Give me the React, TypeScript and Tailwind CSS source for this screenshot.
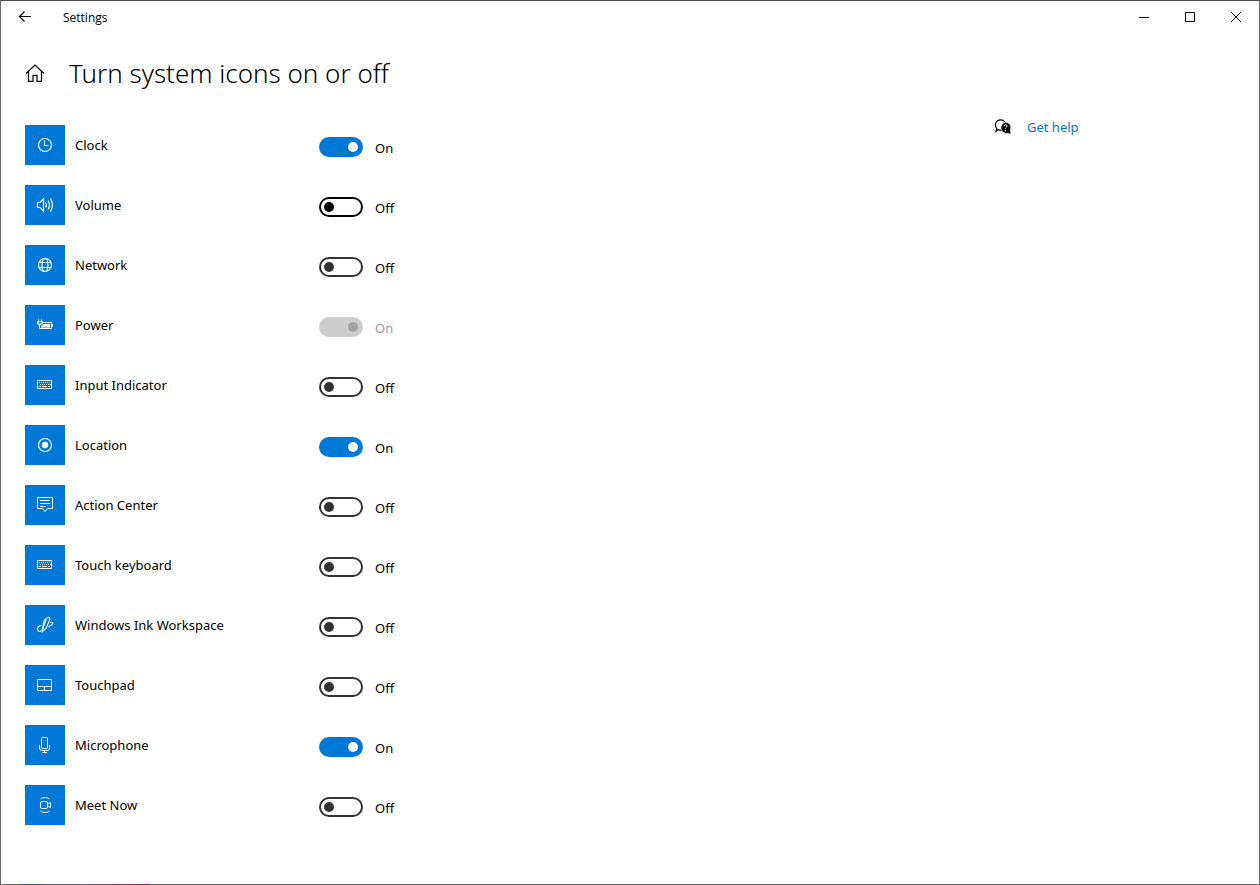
import { useState } from "react";
import type { ReactNode } from "react";

type Item = {
  id: string;
  label: string;
  on: boolean;
  disabled?: boolean;
  icon: ReactNode;
};

const keyboard = (
  <>
    <path d="M12.5 15.5h14v8h-14z" />
    <path d="M14 17.5h11M15 19.5h11" strokeDasharray="1 1" />
    <path d="M14 21.5h2M17 21.5h5M23 21.5h2" />
  </>
);

const initialItems: Item[] = [
  {
    id: "clock",
    label: "Clock",
    on: true,
    icon: (
      <>
        <circle cx="20" cy="20" r="6.5" strokeWidth="1.2" />
        <path d="M19.5 15.5v5h4" />
      </>
    ),
  },
  {
    id: "volume",
    label: "Volume",
    on: false,
    icon: (
      <g strokeWidth="1.2">
        <path d="M12.5 17.5h2.5l3.5-3.5v12l-3.5-3.5h-2.5z" />
        <path d="M20.5 17.5q2 2.5 0 5M23 15.5q3 4.5 0 9M25.5 13.5q4 6.5 0 13" />
      </g>
    ),
  },
  {
    id: "network",
    label: "Network",
    on: false,
    icon: (
      <g strokeWidth="1.2">
        <circle cx="20" cy="20" r="6.5" />
        <ellipse cx="20" cy="20" rx="3" ry="6.5" />
        <path d="M14 17.5h12M14 22.5h12" />
      </g>
    ),
  },
  {
    id: "power",
    label: "Power",
    on: true,
    disabled: true,
    icon: (
      <>
        <path d="M13.5 14v2M16.5 14v2M12 16.5h6M14.5 20v3.5h12v-6h-8M27.5 19v3" />
        <path d="M12 16h6v1.5q0 2-2 2.5h-2q-2-.5-2-2.5z" fill="white" stroke="none" />
        <path d="M13.5 17h3v1q-1.5 1.5-3 0z" fill="#0078d7" stroke="none" />
        <path d="M18.5 19h6.500v3.500h-9v-1.500q2 0 2.500-2z" fill="white" stroke="none" />
      </>
    ),
  },
  { id: "input", label: "Input Indicator", on: false, icon: keyboard },
  {
    id: "location",
    label: "Location",
    on: true,
    icon: (
      <>
        <circle cx="20" cy="20" r="6.5" strokeWidth="1.2" />
        <circle cx="20" cy="20" r="3.2" fill="white" stroke="none" />
      </>
    ),
  },
  {
    id: "action",
    label: "Action Center",
    on: false,
    icon: (
      <>
        <path d="M12.5 12.5h15v11h-5l-2.5 3-2.5-3h-5z" />
        <path d="M15 15.5h10M15 18.5h10M15 21.5h6" />
      </>
    ),
  },
  { id: "touchkb", label: "Touch keyboard", on: false, icon: keyboard },
  {
    id: "ink",
    label: "Windows Ink Workspace",
    on: false,
    icon: (
      <g strokeWidth="1.1">
        <path d="M17.5 26.5l.8-4.5 3.2-8.5q1-1.8 2.5-1 1.2.8.6 2.6l-3.6 8.4z" />
        <path d="M16.5 20.5q-4 .5-4 3.5 0 2.5 2.5 2.5 2.2-.5 2.8-3.5l1-6q.5-2 1.7-3.5M25 17.5q2.5-.5 2.8 1 0 1.5-2.3 2-1.8.5-1.5 2" />
      </g>
    ),
  },
  {
    id: "touchpad",
    label: "Touchpad",
    on: false,
    icon: <path d="M12.5 14.5h14v11h-14zM12.5 21.5h14M19.5 21.5v4" />,
  },
  {
    id: "mic",
    label: "Microphone",
    on: true,
    icon: (
      <>
        <rect x="16.5" y="12.5" width="6" height="11" rx="1" />
        <path d="M14.5 20v3q0 2.5 2.5 2.5h5q2.5 0 2.5-2.5v-3M19.5 25.5v2M17 27.5h5" />
      </>
    ),
  },
  {
    id: "meet",
    label: "Meet Now",
    on: false,
    icon: (
      <>
        <rect x="15.5" y="16.5" width="7" height="7" rx="1.5" />
        <path d="M22.5 19l3-1.5v5l-3-1.5M15.5 14q1.5-1.5 4.5-1.5t4.5 1.5M15.5 26q1.5 1.5 4.5 1.5t4.5-1.5" />
      </>
    ),
  },
];

function TitleBar() {
  return (
    <header className="flex h-8 items-center">
      <button type="button" aria-label="Back" className="flex h-8 w-12 items-center justify-center">
        <svg width="14" height="14" viewBox="0 0 14 14" fill="none" stroke="black" strokeWidth="1.2">
          <path d="M13 6.5H1.5M6.5 1.5l-5 5 5 5" />
        </svg>
      </button>
      <span className="ml-3.5 pt-0.5 font-['Open_Sans','Noto_Sans',sans-serif] text-xs">Settings</span>
      <div className="ml-auto flex">
        <button type="button" aria-label="Minimize" className="flex h-8 w-[46px] items-center justify-center">
          <svg width="10" height="10" viewBox="0 0 10 10" stroke="black">
            <path d="M0 5.5h10" />
          </svg>
        </button>
        <button type="button" aria-label="Maximize" className="flex h-8 w-[46px] items-center justify-center">
          <svg width="10" height="10" viewBox="0 0 10 10" fill="none" stroke="black">
            <path d="M.5.5h9v9h-9z" />
          </svg>
        </button>
        <button type="button" aria-label="Close" className="flex h-8 w-[46px] items-center justify-center">
          <svg width="10" height="10" viewBox="0 0 10 10" stroke="black">
            <path d="M0 0l10 10M10 0L0 10" />
          </svg>
        </button>
      </div>
    </header>
  );
}

function SettingRow({ item, onToggle }: { item: Item; onToggle: () => void }) {
  const offStyle =
    item.id === "volume"
      ? "border-black before:bg-black"
      : "border-[#333333] before:bg-[#333333]";
  const state = item.disabled
    ? "border-[#cccccc] bg-[#cccccc] before:ml-auto before:bg-[#a3a3a3]"
    : item.on
      ? "border-[#0078d7] bg-[#0078d7] before:ml-auto before:bg-white"
      : offStyle;
  return (
    <li className="flex h-10 items-center">
      <svg
        className="h-10 w-10 shrink-0 bg-[#0078d7]"
        viewBox="0 0 40 40"
        fill="none"
        stroke="white"
        aria-hidden="true"
      >
        {item.icon}
      </svg>
      <label htmlFor={item.id} className="ml-2.5 w-[244px]">
        {item.label}
      </label>
      <div className="flex items-center pt-1">
        <input
          id={item.id}
          type="checkbox"
          role="switch"
          checked={item.on}
          disabled={item.disabled}
          onChange={onToggle}
          className={`flex h-5 w-11 appearance-none items-center rounded-full border-2 px-[3px] before:h-2.5 before:w-2.5 before:rounded-full ${state}`}
        />
        <span className={`ml-3 pt-0.5 ${item.disabled ? "text-[#999999]" : ""}`}>
          {item.on ? "On" : "Off"}
        </span>
      </div>
    </li>
  );
}

export default function App() {
  const [items, setItems] = useState(initialItems);
  const toggle = (id: string) =>
    setItems(items.map((i) => (i.id === id ? { ...i, on: !i.on } : i)));

  return (
    <div className="flex min-h-screen flex-col border-x border-t border-x-[#6b6b6b] border-t-[#4a4a4a] bg-white font-['Noto_Sans','Open_Sans',sans-serif] text-[13px] leading-5 text-black">
      <TitleBar />
      <div className="mt-5 flex items-center pl-6">
        <a href="#home" aria-label="Home">
          <svg width="20" height="20" viewBox="0 0 20 20" fill="none" stroke="black" strokeWidth="1.2">
            <path d="M1 10.5L10 2l9 8.5M3.5 8.5v9.9h4.5v-6h4v6h4.5v-9.9" />
          </svg>
        </a>
        <h1 className="ml-6 text-[26px] leading-10 font-light">Turn system icons on or off</h1>
      </div>
      <div className="flex flex-1 pt-8 pr-6 pb-14 pl-6">
        <ul className="flex flex-col gap-5">
          {items.map((item) => (
            <SettingRow key={item.id} item={item} onToggle={() => toggle(item.id)} />
          ))}
        </ul>
        <aside className="ml-auto w-60">
          <a href="#help" className="flex h-5 -translate-y-2 items-center gap-4 text-[#0078d7]">
            <svg width="16" height="16" viewBox="0 0 16 16" aria-hidden="true">
              <path
                d="M1 12.3l.9-2.6A5.2 5.2 0 1 1 6 11.2q-1.5 0-2.7-.6z"
                fill="none"
                stroke="black"
                strokeWidth="1.2"
              />
              <path
                d="M10.5 3.3a5.3 5.3 0 0 1 4.7 7.8l.8 4.4-3.3-1.2A5.4 5.4 0 1 1 10.5 3.3z"
                fill="black"
                stroke="white"
                strokeWidth=".6"
              />
              <path
                d="M8.9 7.2q.2-1.4 1.7-1.4t1.5 1.3q0 .8-.8 1.3t-.8 1.3M10.5 10.8v1.2"
                fill="none"
                stroke="white"
              />
            </svg>
            Get help
          </a>
        </aside>
      </div>
      <div className="flex h-px bg-[#6b6b6b]">
        <div className="ml-5 h-px w-32 bg-linear-to-r from-[#1f5c94] via-[#74598c] to-[#8b1a52]" />
      </div>
    </div>
  );
}
